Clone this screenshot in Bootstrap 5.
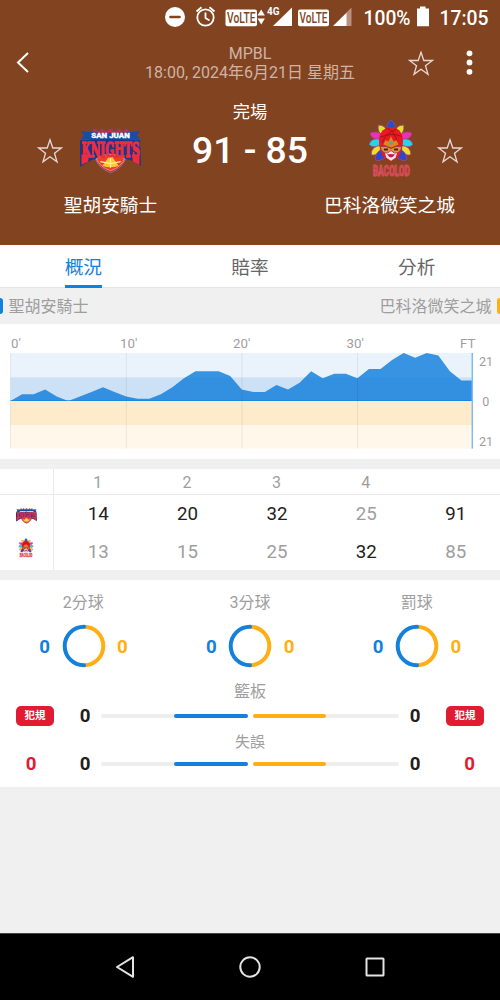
<!DOCTYPE html>
<html lang="zh-Hant">
<head>
<meta charset="utf-8">
<meta name="viewport" content="width=device-width, initial-scale=1">
<title>MPBL</title>
<link rel="stylesheet" href="https://cdn.jsdelivr.net/npm/bootstrap@5.3.0/dist/css/bootstrap.min.css">
<style>
body{font-family:Roboto,"Noto Sans CJK TC",sans-serif;background:#f0f0f0;color:#212121;line-height:1;width:500px;height:1000px;overflow:hidden}
svg{display:block;flex:none}
.hero{background:#824321;height:245px;color:#fff}
.status{height:34px;font-weight:500;padding-right:11px}
.topbar{height:56px}
.meta-text{color:#cdb4a6;font-size:16px;line-height:19px;padding-top:1px}
.score-row{height:68px}
.state{font-size:17.3px;height:24px;line-height:24px;margin-top:10px}
.score{font-size:37.3px;font-weight:500;width:140px;white-space:nowrap;padding-bottom:15px}
.team-name{font-size:18.7px;line-height:28px;height:28px}
.half-l,.half-r{width:221px}
.tabs{height:43px;font-size:18.7px;border-bottom:1px solid #e6e6e6}
.tab-item{color:#666;height:43px;line-height:47px}
.tab-item.on{color:#1380dc}
.tab-item.on span{display:inline-block;height:43px;border-bottom:3px solid #1380dc}
.legend-strip{height:36px;font-size:16px;line-height:20px;color:#9e9e9e}
.legend-strip .strip-name{padding:2px 5.5px 0}
.tick{width:3px;height:16px}
.c-blue{color:#1380dc}.c-gold{color:#ffae13}.c-red{color:#e01b32}
.b-blue{background:#1380dc}.b-gold{background:#ffae13}
.quarters{display:grid;grid-template-columns:53.5px repeat(5,89.4px);height:101px;margin-top:10px;grid-template-rows:26px 38px 37px;font-size:18.7px;overflow:hidden}
.quarters>div{display:flex;align-items:center;justify-content:center}
.quarters .hd{border-bottom:1px solid #e9e9e9;font-size:16px;color:#9e9e9e;padding-top:2px;padding-right:1px}
.quarters .edge{border-right:1px solid #e9e9e9}
.quarters .lose{color:#9e9e9e;padding-top:1px}
.quarters .win{color:#212121;padding-top:1px}
.stats{height:207px;margin-top:10px}
.stat-title{font-size:16px;line-height:20px;color:#9e9e9e}
.digit{font-size:18.7px;font-weight:700;line-height:22px}
.rings{height:92px;padding-top:13px}
.ring-row{gap:11.5px;height:44px;margin-top:11px;padding-left:.5px}
.ring-row .digit{padding-top:2px}
.bar-title{padding-top:10px;height:29px}
.turn-title{padding-top:7px;height:27px;font-size:15px}
.bar-grid{display:grid;grid-template-columns:69px 32px 298px 32px 69px;align-items:center;height:20px}
.bar-grid.rebounds{margin-top:4px}
.bar-grid.turnovers{margin-top:1px}
.bar-pair{display:flex;gap:5px}
.bar-half{height:4px;border-radius:2px;background:#eee;display:flex;flex:1}
.bar-half i{width:50%;border-radius:2px;height:4px}
.cell-l{padding-right:7px}.cell-r{padding-left:8px}
.foul{background:#e01b32;color:#fff;font-size:10.5px;font-weight:700;border-radius:5px;width:38px;height:20px;line-height:20px}
.sysnav{height:67px;background:#000;border-top:1px solid #444;margin-top:146px;padding:0 115px}
svg text{font-family:Roboto,"Noto Sans CJK TC",sans-serif}
svg .slab{font-family:"DejaVu Serif","Liberation Serif",serif;font-weight:700}
</style>
<script src="https://cdn.jsdelivr.net/npm/bootstrap@5.3.0/dist/js/bootstrap.bundle.min.js"></script>
</head>
<body>
<svg width="0" height="0" class="position-absolute">
<symbol id="star" viewBox="0 0 26 26"><path d="M13 1.800 15.800 10H24.400L17.500 15.200 20 23.800 13 18.700 6 23.800 8.500 15.200 1.600 10H10.200Z" fill="none" stroke="#e6d9d2" stroke-width="1.300"/></symbol>
<symbol id="knights" viewBox="0 0 60 45">
<path d="M13 6V1h3v2h4V1h3v2h5V1h4v2h5V1h3v2h4V1h3v5Z" fill="#df2535" stroke="#5a55a0" stroke-width=".5"/>
<path d="M1 3 13 4Q30 5 47 4L59 3 56 7 59 11 49 11Q30 12 11 11L1 11 4 7Z" fill="#164da7"/>
<path d="M14 27Q17 39 30 44 43 39 46 27Z" fill="#d6202c" stroke="#7a7dbb" stroke-width=".8"/>
<path d="M0 12Q30 10 59 12L60 37 49 31Q30 27 12 31L0 38Z" fill="#19378f"/>
<path d="M16 30Q30 21 44 30 41 38 30 42 19 38 16 30Z" fill="#e8412e" stroke="#f2c4b4" stroke-width=".6"/>
<path d="M22 37 30 26 38 37Q30 40 22 37Z" fill="#ffc72c"/><path d="M30 27V39M20 33 30 35 40 33" stroke="#fff2a0" stroke-width="1.200" fill="none"/>
<text class="slab" transform="translate(1.500 28) scale(1 1.480)" font-size="14" textLength="57" lengthAdjust="spacingAndGlyphs" fill="#f02c3a" stroke="#f02c3a" stroke-width="1">KNIGHTS</text>
<path d="M1.500 26H9L8 33 1.500 36ZM51 26H58.500V36L52 33Z" fill="#f02c3a"/>
<text x="11" y="9.900" font-size="6.200" font-weight="900" textLength="38" lengthAdjust="spacingAndGlyphs" fill="#fff" stroke="#fff" stroke-width=".25">SAN JUAN</text>
</symbol>
<symbol id="mask" viewBox="0 0 45 58">
<g stroke="#a6428e" stroke-width=".8">
<path d="M22.500 1Q29 6 25 12H20Q16 6 22.500 1Z" fill="#224fca"/>
<path d="M10 6Q18 6 18 13L14 16Q9 13 10 6ZM35 6Q27 6 27 13L31 16Q36 13 35 6Z" fill="#dce423"/>
<path d="M2 14Q9 11 14 16L11 20Q3 20 2 14ZM43 14Q36 11 31 16L34 20Q42 20 43 14Z" fill="#ed31b2"/>
<path d="M1 25Q3 18 12 20V26Q4 29 1 25ZM44 25Q42 18 33 20V26Q41 29 44 25Z" fill="#25d5e8"/>
<path d="M3 35Q3 27 12 26V31Q8 37 3 35ZM42 35Q42 27 33 26V31Q37 37 42 35Z" fill="#ecdf29"/>
<path d="M7 40Q7 33 13 30L17 37Q11 43 7 40ZM38 40Q38 33 32 30L28 37Q34 43 38 40Z" fill="#3146ca"/></g>
<path d="M11 26Q9 9 22.500 8 36 9 34 26L31 36 22.500 42 14 36Z" fill="#ea1820"/>
<path d="M12 18Q22 13 33 17M18 9Q26 11 29 24M14 23Q17 14 28 10" fill="none" stroke="#8d171b" stroke-width=".9"/>
<path d="M16 32Q22.500 28 29 32L27 38 22.500 41 18 38Z" fill="#f7e5e5"/>
<path d="M12 27Q18 26 22.500 29 27 26 33 27 32 34 26 33.500L22.500 31 19 33.500Q13 34 12 27Z" fill="#d89a32" stroke="#a3245f" stroke-width=".8"/>
<path d="M15.500 30h4M25.500 30h4" stroke="#40222d" stroke-width="1.800"/>
<path d="M15 25 17 21 20 22 22.500 17 25 22 28 21 30 25 22.500 28Z" fill="#df861f"/><circle cx="22.500" cy="23.500" r="1.700" fill="#28b2cb"/>
<path d="M18.500 35Q22.500 34 26.500 35 22.500 40.500 18.500 35Z" fill="#c51763"/>
<text x="4.500" y="56" font-size="14" font-weight="900" textLength="36.500" lengthAdjust="spacingAndGlyphs" fill="#e0404c" stroke="#d2525c" stroke-width=".9">BACOLOD</text>
</symbol>
</svg>

<header class="hero">
  <div class="status d-flex justify-content-end align-items-center">
    <svg width="270" height="34" viewBox="160 0 270 34">
      <circle cx="175" cy="17" r="10" fill="#fff"/><path d="M170.500 17h9" stroke="#824321" stroke-width="2.600" stroke-linecap="round"/>
      <g fill="none" stroke="#fff" stroke-width="1.800"><circle cx="205.500" cy="17.500" r="8.200"/><path d="M205.500 12.500v5.500l4 2.500M196.500 11.500l5-4.200M214.500 11.500l-5-4.200"/></g>
      <rect x="225.500" y="9.500" width="31.500" height="16.800" rx="2" fill="#fff"/><rect x="298" y="9.500" width="31" height="16.800" rx="2" fill="#fff"/>
      <g fill="#824321" font-size="14" font-weight="500"><text x="227" y="23.300" textLength="28.500" lengthAdjust="spacingAndGlyphs">VoLTE</text><text x="299.500" y="23.300" textLength="28" lengthAdjust="spacingAndGlyphs">VoLTE</text></g>
      <path d="M257.500 15.500l3.700-6 3.700 6ZM257.500 18.500h7.400l-3.700 6Z" fill="#fff"/>
      <text x="267" y="15" font-size="10.500" font-weight="700" fill="#fff" textLength="12.500" lengthAdjust="spacingAndGlyphs">4G</text>
      <path d="M273 26 292 7.500V26Z" fill="#fff"/><path d="M346 13 351.500 7.500V26H346Z" fill="#b8927f"/><path d="M333 26 346.500 12.800V26Z" fill="#fff"/>
      <text x="363.500" y="24.500" font-size="19.500" fill="#fff" textLength="47" lengthAdjust="spacingAndGlyphs">100%</text>
      <path d="M417 8.500h3V6.500h5.500v2h3.500v17.800H417Z" fill="#fff"/>
    </svg>
    <svg width="59" height="34" viewBox="430 0 59 34"><text x="439.500" y="24.500" font-size="19.500" fill="#fff" textLength="49" lengthAdjust="spacingAndGlyphs">17:05</text></svg>
  </div>
  <div class="topbar d-flex align-items-center">
    <svg width="100" height="56" viewBox="0 34 100 56"><path d="M28 53 18 62.500 28 72" fill="none" stroke="#fff" stroke-width="2"/></svg>
    <div class="flex-fill text-center meta-text text-nowrap"><div>MPBL</div><div>18:00, 2024年6月21日 星期五</div></div>
    <svg width="100" height="56" viewBox="400 34 100 56"><use href="#star" x="408" y="50.500" width="26" height="26"/><g fill="#fff"><circle cx="469.500" cy="53.300" r="2.900"/><circle cx="469.500" cy="62.500" r="2.900"/><circle cx="469.500" cy="71.800" r="2.900"/></g></svg>
  </div>
  <div class="state text-center">完場</div>
  <div class="score-row d-flex align-items-end justify-content-between">
    <svg width="180" height="76" viewBox="0 116 180 76"><use href="#star" x="37" y="138" width="26" height="26"/><use href="#knights" x="80" y="128" width="61" height="46"/></svg>
    <div class="score text-center align-self-center">91 - 85</div>
    <svg width="180" height="76" viewBox="320 116 180 76"><use href="#mask" x="368" y="119" width="46" height="59" /><use href="#star" x="437" y="138" width="26" height="26"/></svg>
  </div>
  <div class="d-flex justify-content-between team-name text-center"><div class="half-l">聖胡安騎士</div><div class="half-r">巴科洛微笑之城</div></div>
</header>

<nav class="tabs row g-0 bg-white text-center">
  <div class="col tab-item on"><span>概況</span></div><div class="col tab-item">賠率</div><div class="col tab-item">分析</div>
</nav>
<div class="legend-strip d-flex align-items-center">
  <span class="tick b-blue rounded-end-1"></span><span class="strip-name">聖胡安騎士</span>
  <span class="ms-auto strip-name">巴科洛微笑之城</span><span class="tick b-gold rounded-start-1"></span>
</div>
<section class="bg-white">
<svg id="chart" width="500" height="135" viewBox="0 324 500 135">
  <path d="M10.500 353H473V377.200H10.500Z" fill="#eaf3fc"/><path d="M10.500 377.200H473V401H10.500Z" fill="#cce1f6"/>
  <path d="M10.500 401H473V425H10.500Z" fill="#feebcc"/><path d="M10.500 425H473V448.600H10.500Z" fill="#fff7ea"/>
  <path id="area" fill="#1380dc" fill-opacity=".83"/>
  <path d="M10.500 353v95.600M126.300 353v95.600M242 353v95.600M357.500 353v95.600" stroke="#000" stroke-opacity=".07"/>
  <path d="M10.500 400.500H473" stroke="#1380dc" stroke-opacity=".6"/>
  <path d="M472.300 353v95.600" stroke="#7dbcf0" stroke-width="1.500"/>
  <g font-size="13.300" fill="#9e9e9e"><text x="11" y="348">0'</text><text x="120" y="348">10'</text><text x="233" y="348">20'</text><text x="346.500" y="348">30'</text><text x="460" y="348">FT</text>
  <g font-size="12.500"><text x="479" y="365.500">21</text><text x="482.300" y="406">0</text><text x="479" y="445.500">21</text></g></g>
</svg>
</section>
<section class="quarters bg-white">
  <div class="hd edge"></div><div class="hd">1</div><div class="hd">2</div><div class="hd">3</div><div class="hd">4</div><div class="hd"></div>
  <div class="edge pt-1"><svg width="21" height="16"><use href="#knights" width="21" height="16"/></svg></div><div class="win">14</div><div class="win">20</div><div class="win">32</div><div class="lose">25</div><div class="win">91</div>
  <div class="edge pb-2"><svg width="16" height="20"><use href="#mask" width="16" height="20"/></svg></div><div class="lose">13</div><div class="lose">15</div><div class="lose">25</div><div class="win">32</div><div class="lose">85</div>
</section>
<section class="stats bg-white">
  <div class="rings row g-0 text-center" id="rings"></div>
  <div class="stat-title bar-title text-center">籃板</div>
  <div class="bar-grid rebounds text-center">
    <div class="ps-3"><div class="foul">犯規</div></div><div class="digit">0</div>
    <div class="bar-pair"><div class="bar-half justify-content-end"><i class="b-blue"></i></div><div class="bar-half"><i class="b-gold"></i></div></div>
    <div class="digit">0</div><div class="pe-3"><div class="foul ms-auto">犯規</div></div>
  </div>
  <div class="stat-title turn-title text-center">失誤</div>
  <div class="bar-grid turnovers text-center">
    <div class="digit c-red cell-l">0</div><div class="digit">0</div>
    <div class="bar-pair"><div class="bar-half justify-content-end"><i class="b-blue"></i></div><div class="bar-half"><i class="b-gold"></i></div></div>
    <div class="digit">0</div><div class="digit c-red cell-r">0</div>
  </div>
</section>
<footer class="sysnav d-flex justify-content-between align-items-center">
  <svg width="20" height="24" fill="none" stroke="#e4e4e4" stroke-width="2"><path d="M18 2.200V21.800L2 12Z" stroke-linejoin="round"/></svg>
  <svg width="24" height="24" fill="none" stroke="#e4e4e4" stroke-width="2"><circle cx="12" cy="12" r="9.700"/></svg>
  <svg width="20" height="20" fill="none" stroke="#e4e4e4" stroke-width="2"><rect x="1.500" y="1.500" width="17" height="17" rx=".5"/></svg>
</footer>
<script>
const lead=[0,3,3,5,2,0,2,4,6,4,2,1,1,3,6,10,13,13,13,11,5,4,4,7,5,8,13,10,12,12,10,14,14,18,21,19,21,20,13,9,9];
document.getElementById('area').setAttribute('d','M10.5 401'+lead.map((v,i)=>'L'+(10.5+i*11.5625)+' '+(401-v*2.28)).join('')+'V401Z');
document.getElementById('rings').innerHTML=['2分球','3分球','罰球'].map(t=>`<div class="col"><div class="stat-title">${t}</div><div class="ring-row d-flex justify-content-center align-items-center"><span class="digit c-blue">0</span><svg width="44" height="44" fill="none" stroke-width="4"><path d="M22 2.700a19.300 19.300 0 0 1 0 38.600" stroke="#ffae13"/><path d="M22 2.700a19.300 19.300 0 0 0 0 38.600" stroke="#1380dc" stroke-linecap="round"/></svg><span class="digit c-gold">0</span></div></div>`).join('');
</script>
</body>
</html>
